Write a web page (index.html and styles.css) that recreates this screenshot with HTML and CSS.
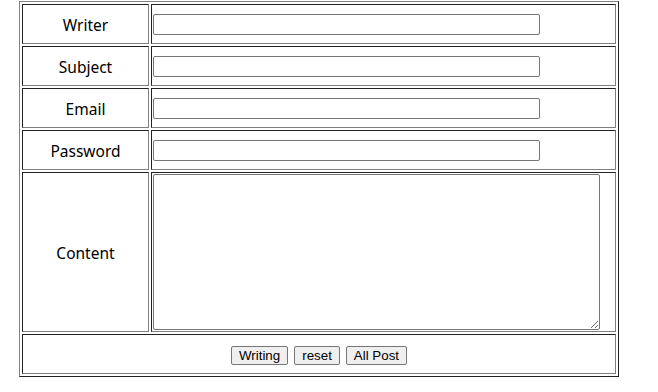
FILE: index.html
```html
<!DOCTYPE html>
<html lang="en">
<head>
	<meta charset="UTF-8">
	<title>Write</title>
	<link rel="stylesheet" href="styles.css">
</head>
<body>
	<form class="write">
		<table class="board">
			<tr>
				<td class="label">Writer</td>
				<td class="field"><input type="text" class="line" name="writer"></td>
			</tr>
			<tr>
				<td class="label">Subject</td>
				<td class="field"><input type="text" class="line" name="subject"></td>
			</tr>
			<tr>
				<td class="label">Email</td>
				<td class="field"><input type="text" class="line" name="email"></td>
			</tr>
			<tr>
				<td class="label">Password</td>
				<td class="field"><input type="password" class="line" name="pass"></td>
			</tr>
			<tr class="big">
				<td class="label">Content</td>
				<td class="field"><textarea class="content" name="content"></textarea></td>
			</tr>
			<tr>
				<td colspan="2" class="buttons">
					<input type="submit" class="btn" value="Writing">
					<input type="reset" class="btn" value="reset">
					<input type="button" class="btn" value="All Post">
				</td>
			</tr>
		</table>
	</form>
</body>
</html>
```

FILE: styles.css
```css
html,body{
	margin: 0;padding: 0;background: #fff;
}
.write{
	padding: 1px 0 0 19px;
}
.board{
	width: 600px;table-layout: fixed;
	border-collapse: separate;border-spacing: 2px;
	border: 1px solid;border-color: #808080 #222 #222 #808080;
}
.board td{
	padding: 1px;
	border: 1px solid;border-color: #222 #808080 #808080 #222;
	height: 36px;
}
.board .big td{
	height: 156px;
}
.board td.label{
	width: 123px;
	padding: 2px 1px 0;
	text-align: center;vertical-align: middle;
	font-family: "Noto Sans", "Open Sans", sans-serif;font-size: 15.5px;color: #000;
}
.field{
	vertical-align: middle;
}
.line{
	display: block;box-sizing: border-box;
	width: 387px;height: 21px;margin: 0;
	border: 1px solid #767676;border-radius: 2px;
	padding: 1px 2px;
	font: 13.33px "Liberation Sans", Arial, sans-serif;
}
.content{
	display: block;box-sizing: border-box;
	width: 447px;height: 156px;margin: 0;
	border: 1px solid #767676;border-radius: 2px;
	padding: 2px;
	font: 13.33px "Liberation Mono", monospace;
}
.buttons{
	text-align: center;vertical-align: middle;
	font-size: 0;
}
.btn{
	box-sizing: border-box;
	height: 19px;margin: 3px 3px 0;padding: 0 7px;
	background: #efefef;border: 1px solid #767676;border-radius: 2px;
	font: 13.33px "Liberation Sans", Arial, sans-serif;color: #000;
	vertical-align: middle;
}
```
